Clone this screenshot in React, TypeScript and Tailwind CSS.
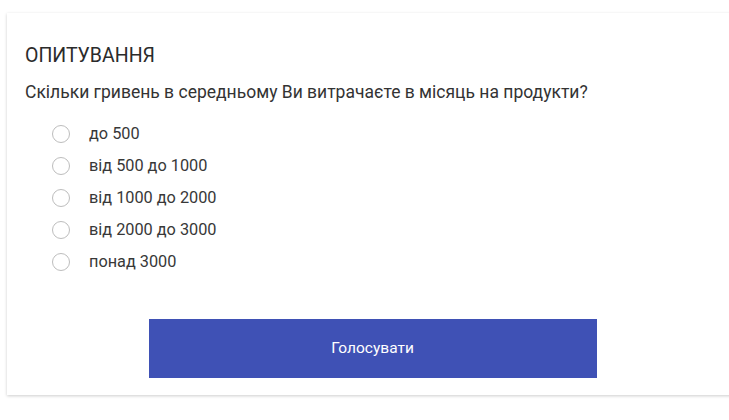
import React from 'react';

const options = ['до 500', 'від 500 до 1000', 'від 1000 до 2000', 'від 2000 до 3000', 'понад 3000'];

export default function App() {
  return (
    <div className="w-[729px] h-[420px] overflow-hidden bg-white pl-[7px] pt-[13px] font-['Roboto',sans-serif]">
      <div className="w-[760px] h-[382px] bg-white shadow-[0_1px_3px_rgba(0,0,0,0.2)] pl-[18px] pt-[31px]">
        <h2 className="text-[19.5px] leading-[24px] text-[#2b2b2b]">ОПИТУВАННЯ</h2>
        <p className="mt-[12px] text-[17.5px] leading-[24px] text-[#333]">
          Скільки гривень в середньому Ви витрачаєте в місяць на продукти?
        </p>
        <ul className="mt-[14px] pl-[27px] flex flex-col">
          {options.map((o) => (
            <li key={o} className="h-[32px] flex items-center gap-[19px]">
              <span className="w-[18px] h-[18px] rounded-full border border-[#bdbdbd] bg-white" />
              <span className="text-[16.3px] text-[#383838]">{o}</span>
            </li>
          ))}
        </ul>
        <div className="w-[729px] flex justify-center -ml-[17px] mt-[41px]">
          <button className="w-[448px] h-[59px] bg-[#3f51b5] text-white text-[15.5px] font-normal">
            Голосувати
          </button>
        </div>
      </div>
    </div>
  );
}
